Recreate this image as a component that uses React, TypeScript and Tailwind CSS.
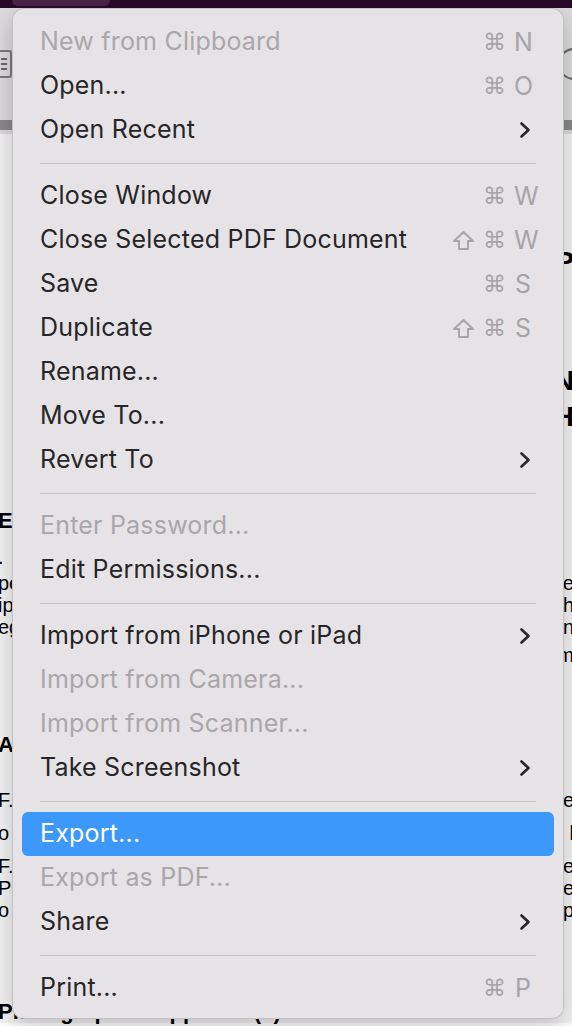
import React from 'react';

type MenuItem =
  | { kind: 'sep' }
  | {
      kind: 'item';
      label: string;
      disabled?: boolean;
      shift?: boolean;
      keyChar?: string;
      submenu?: boolean;
      active?: boolean;
    };

const items: MenuItem[] = [
  { kind: 'item', label: 'New from Clipboard', disabled: true, keyChar: 'N' },
  { kind: 'item', label: 'Open...', keyChar: 'O' },
  { kind: 'item', label: 'Open Recent', submenu: true },
  { kind: 'sep' },
  { kind: 'item', label: 'Close Window', keyChar: 'W' },
  { kind: 'item', label: 'Close Selected PDF Document', shift: true, keyChar: 'W' },
  { kind: 'item', label: 'Save', keyChar: 'S' },
  { kind: 'item', label: 'Duplicate', shift: true, keyChar: 'S' },
  { kind: 'item', label: 'Rename...' },
  { kind: 'item', label: 'Move To...' },
  { kind: 'item', label: 'Revert To', submenu: true },
  { kind: 'sep' },
  { kind: 'item', label: 'Enter Password...', disabled: true },
  { kind: 'item', label: 'Edit Permissions...' },
  { kind: 'sep' },
  { kind: 'item', label: 'Import from iPhone or iPad', submenu: true },
  { kind: 'item', label: 'Import from Camera...', disabled: true },
  { kind: 'item', label: 'Import from Scanner...', disabled: true },
  { kind: 'item', label: 'Take Screenshot', submenu: true },
  { kind: 'sep' },
  { kind: 'item', label: 'Export...', active: true },
  { kind: 'item', label: 'Export as PDF...', disabled: true },
  { kind: 'item', label: 'Share', submenu: true },
  { kind: 'sep' },
  { kind: 'item', label: 'Print...', keyChar: 'P' },
];

// fragments of the document peeking out on both sides of the menu
// h = distance from the previous line's baseline
const docLines = [
  { h: 142, left: '', right: 'P', bold: true, size: 28 },
  { h: 119, left: '', right: 'N', bold: true, size: 28 },
  { h: 36, left: '', right: 'H', bold: true, size: 28 },
  { h: 101, left: 'EI', right: '', bold: true, size: 22 },
  { h: 35, left: '. ', right: '', bold: false, size: 20 },
  { h: 26, left: 'pe', right: 're', bold: false, size: 20 },
  { h: 22, left: 'ip', right: 'h', bold: false, size: 20 },
  { h: 22, left: 'eg', right: 'n', bold: false, size: 20 },
  { h: 28, left: '', right: 'm', bold: false, size: 20 },
  { h: 91, left: 'Al', right: '', bold: true, size: 22 },
  { h: 54, left: 'F.', right: 'e', bold: false, size: 20 },
  { h: 33, left: 'o', right: 'l', bold: false, size: 20 },
  { h: 33, left: 'F.', right: 'e', bold: false, size: 20 },
  { h: 22, left: 'PF', right: 'e', bold: false, size: 20 },
  { h: 22, left: 'o', right: 'p', bold: false, size: 20 },
  { h: 103, left: 'Photograph of Applicant(s)', right: '', bold: true, size: 22 },
];

const Chevron = () => (
  <svg width="12" height="18" viewBox="0 0 12 18" fill="none">
    <path d="M2.5 2.5 L9.5 9 L2.5 15.5" stroke="#262626" strokeWidth="2.6" strokeLinecap="round" strokeLinejoin="round" />
  </svg>
);

const ShiftGlyph = ({ color }: { color: string }) => (
  <svg width="23" height="21" viewBox="0 0 23 21" fill="none">
    <path d="M11.5 2 L21 11 H16 V19 H7 V11 H2 Z" stroke={color} strokeWidth="1.9" strokeLinejoin="round" />
  </svg>
);

const Row = ({ item }: { item: Extract<MenuItem, { kind: 'item' }> }) => {
  const textColor = item.active ? 'text-white' : item.disabled ? 'text-[#a9a7a9]' : 'text-[#262626]';
  return (
    <div
      className={`flex h-[44px] items-center justify-between rounded-[6px] pl-[18px] pr-[22px] ${
        item.active ? 'bg-[#3d98fc]' : ''
      }`}
    >
      <span className={`text-[25px] tracking-[0.2px] ${textColor}`}>{item.label}</span>
      {item.keyChar && (
        <span className="flex items-center gap-[8px] text-[#a6a4a6]">
          {item.shift && <ShiftGlyph color="#a6a4a6" />}
          <span className="font-['DejaVu_Sans',sans-serif] text-[23px] leading-none">⌘</span>
          <span className="w-[18px] text-center text-[25px] leading-none">{item.keyChar}</span>
        </span>
      )}
      {item.submenu && (
        <span className="mr-[1px] flex items-center">
          <Chevron />
        </span>
      )}
    </div>
  );
};

const App: React.FC = () => {
  return (
    <div className="relative h-[1026px] w-[572px] overflow-hidden bg-white font-['Inter','Liberation_Sans',sans-serif]">
      {/* window title bar */}
      <div className="h-[8px] bg-[#2b0a29] pl-[12px]">
        <div className="h-[6px] w-[98px] rounded-b-[6px] bg-[#4a2347]" />
      </div>

      {/* toolbar */}
      <div className="flex h-[112px] items-center justify-between bg-[#dddbdd]">
        <div className="ml-[-6px] flex h-[28px] w-[18px] flex-col justify-center gap-[3px] rounded-[3px] border-2 border-[#7c7a7c] pl-[5px]">
          <div className="h-[2px] w-[6px] bg-[#6c6a6c]" />
          <div className="h-[2px] w-[6px] bg-[#6c6a6c]" />
          <div className="h-[2px] w-[6px] bg-[#6c6a6c]" />
        </div>
        <div className="mr-[-18px] h-[32px] w-[32px] rounded-full border-2 border-[#6c6a6c]" />
      </div>
      <div className="h-[10px] bg-[#8a888a]" />
      <div className="h-[4px] bg-[#dcdadc]" />

      {/* document */}
      <div className="flex flex-col bg-[#f3f3f3] font-['Liberation_Sans',sans-serif] text-black">
        {docLines.map((l, i) => (
          <div
            key={i}
            className={`flex items-end justify-between leading-none ${l.bold ? 'font-bold' : ''}`}
            style={{ height: l.h, fontSize: l.size }}
          >
            <span className="ml-[-2px] whitespace-nowrap">{l.left}</span>
            <span className="mr-[-2px] whitespace-nowrap">{l.right}</span>
          </div>
        ))}
      </div>

      {/* File menu */}
      <div className="absolute left-[12px] top-[8px] w-[552px] rounded-[12px] border border-black/15 bg-[#e6e3e6] px-[9px] pb-[8px] pt-[11px] shadow-[0_8px_24px_rgba(0,0,0,0.22)]">
        {items.map((item, i) =>
          item.kind === 'sep' ? (
            <div key={i} className="flex h-[22px] items-center px-[18px]">
              <div className="h-px w-full bg-[#c8c5c8]" />
            </div>
          ) : (
            <Row key={i} item={item} />
          )
        )}
      </div>
    </div>
  );
};

export default App;
